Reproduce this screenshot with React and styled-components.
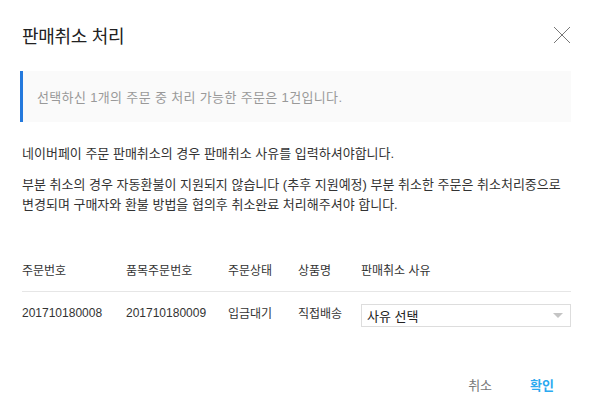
import React from "react";
import styled, { createGlobalStyle } from "styled-components";

const GlobalStyle = createGlobalStyle`
  html, body {
    margin: 0;
    padding: 0;
    background: #fff;
  }
  body {
    font-family: "Liberation Sans", "Noto Sans CJK KR", sans-serif;
    color: #333;
  }
`;

const Modal = styled.div`
  width: 596px;
  height: 414px;
  box-sizing: border-box;
  padding: 22px 25px 0 22px;
  display: flex;
  flex-direction: column;
`;

const Header = styled.div`
  display: flex;
  justify-content: space-between;
  align-items: center;
  height: 26px;
`;

const Title = styled.h2`
  margin: 0;
  font-size: 18px;
  font-weight: normal;
  color: #222;
  letter-spacing: -0.3px;
`;

const CloseButton = styled.button`
  background: none;
  border: none;
  padding: 0;
  width: 20px;
  height: 20px;
  cursor: pointer;
  margin-right: -1px;
`;

const InfoBox = styled.div`
  margin: 23px 0 0 -2px;
  height: 51px;
  background: #fafafa;
  border-left: 3px solid #2479dd;
  display: flex;
  align-items: center;
  padding-left: 14px;
  font-size: 13px;
  letter-spacing: 0.35px;
  color: #999;
`;

const Paragraph = styled.p`
  margin: ${(p) => p.$top}px 0 0;
  font-size: 13px;
  line-height: 20px;
  color: #333;
`;

const Table = styled.table`
  margin-top: 32px;
  border-collapse: collapse;
  width: 549px;
  font-size: 12px;
  color: #333;
`;

const Th = styled.th`
  text-align: left;
  font-weight: normal;
  padding: 0;
  height: 44px;
  width: ${(p) => p.$w}px;
  border-bottom: 1px solid #e6e6e6;
  vertical-align: middle;
`;

const Td = styled.td`
  padding: 0;
  height: 41px;
  vertical-align: middle;
`;

const Select = styled.div`
  width: 210px;
  height: 23px;
  box-sizing: border-box;
  border: 1px solid #ddd;
  display: flex;
  align-items: center;
  justify-content: space-between;
  padding: 0 7px 0 5px;
  font-size: 13px;
  color: #222;
  margin-top: 6px;
`;

const Caret = styled.span`
  width: 0;
  height: 0;
  border-left: 5px solid transparent;
  border-right: 5px solid transparent;
  border-top: 5px solid #c4c4c4;
`;

const Footer = styled.div`
  margin-top: 42px;
  display: flex;
  justify-content: flex-end;
  gap: 38px;
  padding-right: 17px;
`;

const ActionButton = styled.button`
  background: none;
  border: none;
  padding: 0;
  font-family: inherit;
  font-size: 13px;
  color: ${(p) => (p.$primary ? "#2aa9f0" : "#777")};
  font-weight: ${(p) => (p.$primary ? "bold" : "normal")};
  cursor: pointer;
`;

export default function App() {
  return (
    <>
      <GlobalStyle />
      <Modal>
        <Header>
          <Title>판매취소 처리</Title>
          <CloseButton aria-label="닫기">
            <svg width="20" height="20" viewBox="0 0 20 20">
              <path d="M2 2 L18 18 M18 2 L2 18" stroke="#777" strokeWidth="1" fill="none" />
            </svg>
          </CloseButton>
        </Header>
        <InfoBox>선택하신 1개의 주문 중 처리 가능한 주문은 1건입니다.</InfoBox>
        <Paragraph $top={22}>네이버페이 주문 판매취소의 경우 판매취소 사유를 입력하셔야합니다.</Paragraph>
        <Paragraph $top={11}>
          부분 취소의 경우 자동환불이 지원되지 않습니다 (추후 지원예정) 부분 취소한 주문은 취소처리중으로
          <br />
          변경되며 구매자와 환불 방법을 협의후 취소완료 처리해주셔야 합니다.
        </Paragraph>
        <Table>
          <thead>
            <tr>
              <Th $w={104}>주문번호</Th>
              <Th $w={102}>품목주문번호</Th>
              <Th $w={70}>주문상태</Th>
              <Th $w={63}>상품명</Th>
              <Th>판매취소 사유</Th>
            </tr>
          </thead>
          <tbody>
            <tr>
              <Td>201710180008</Td>
              <Td>201710180009</Td>
              <Td>입금대기</Td>
              <Td>직접배송</Td>
              <Td>
                <Select>
                  <span>사유 선택</span>
                  <Caret />
                </Select>
              </Td>
            </tr>
          </tbody>
        </Table>
        <Footer>
          <ActionButton>취소</ActionButton>
          <ActionButton $primary>확인</ActionButton>
        </Footer>
      </Modal>
    </>
  );
}
